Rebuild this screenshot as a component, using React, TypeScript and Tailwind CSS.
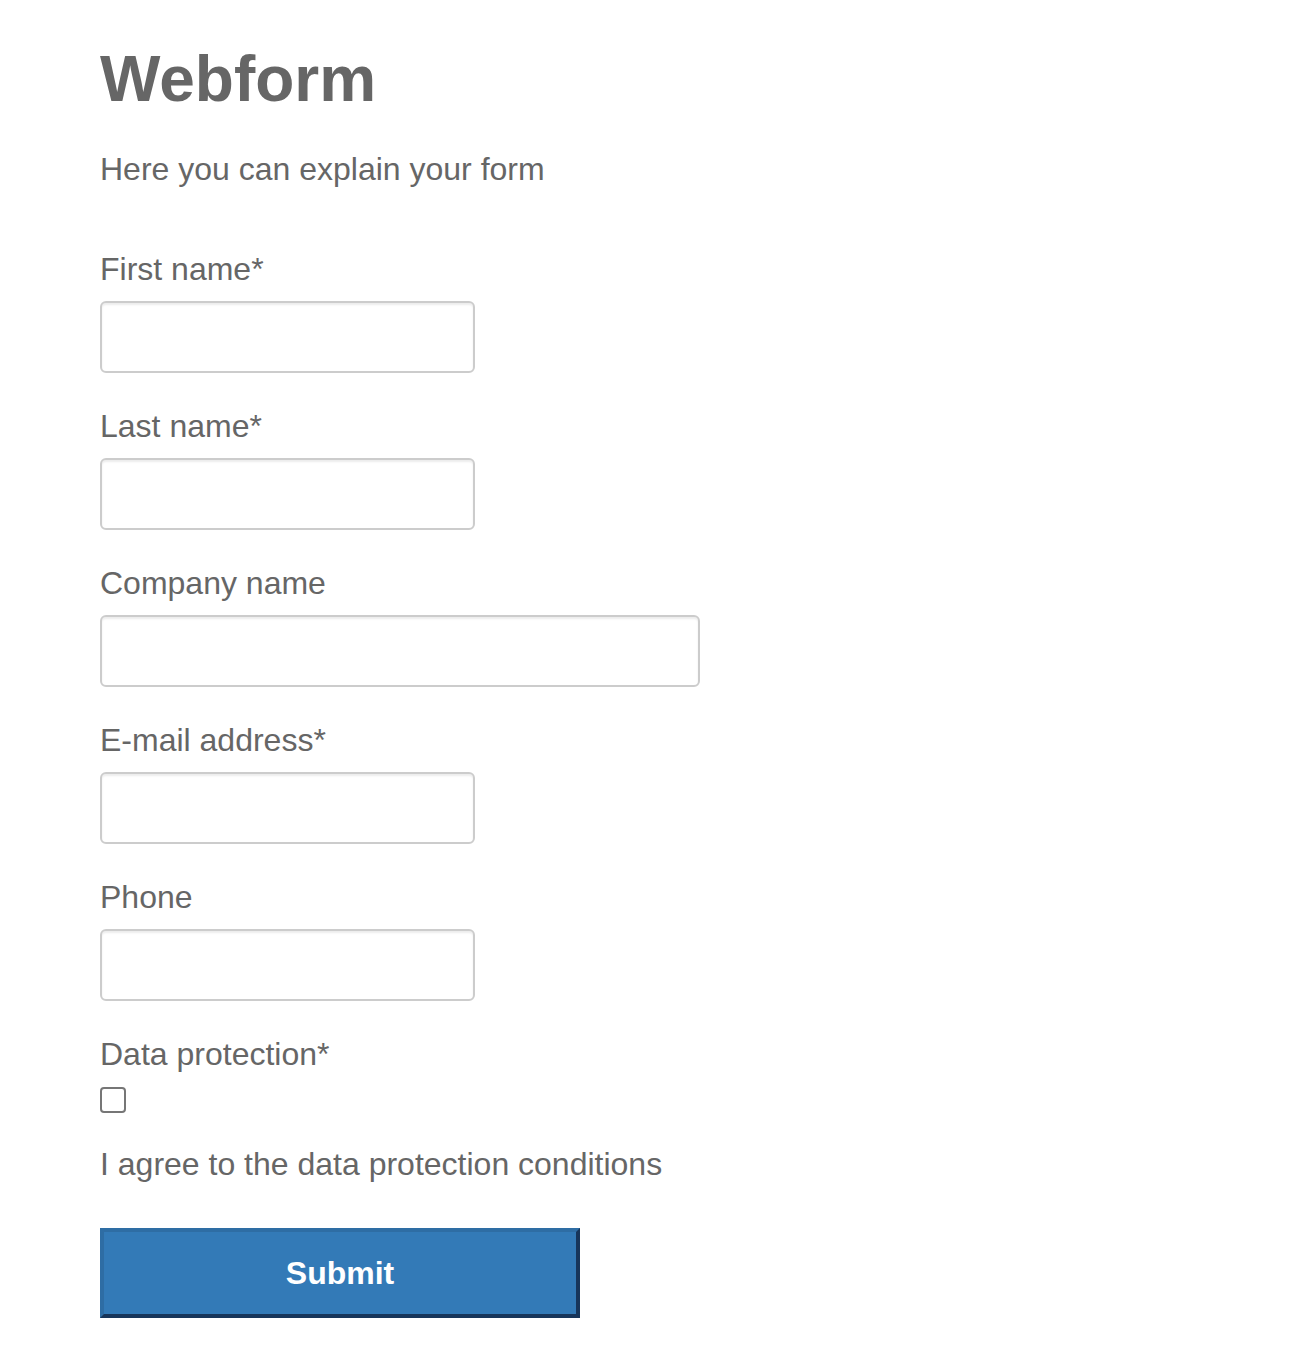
import React from 'react';

export default function App() {
  const fields = [
    { label: 'First name*', wide: false },
    { label: 'Last name*', wide: false },
    { label: 'Company name', wide: true },
    { label: 'E-mail address*', wide: false },
    { label: 'Phone', wide: false },
  ];

  return (
    <div className="min-h-screen bg-white font-['Liberation_Sans',Arial,sans-serif] text-[#666666]">
      <div className="pl-[100px] pt-[42px]">
        <h1 className="text-[64px] leading-[74px] font-bold">Webform</h1>
        <p className="mt-[35px] text-[32px] leading-[37px]">Here you can explain your form</p>

        <form className="mt-[65px]" onSubmit={(e) => e.preventDefault()}>
          {fields.map((field, index) => (
            <div key={index} className="mb-[37px]">
              <label className="block text-[32px] leading-[33px] mb-[15px]">{field.label}</label>
              <input
                type="text"
                className={`block h-[72px] ${field.wide ? 'w-[600px]' : 'w-[375px]'} rounded-[6px] border-2 border-[#cccccc] bg-white px-3 text-[32px] shadow-[inset_0_2px_2px_rgba(0,0,0,0.075)] outline-none`}
              />
            </div>
          ))}

          <div>
            <label className="block text-[32px] leading-[33px]">Data protection*</label>
            <div className="mt-[16px] h-[26px] w-[26px] rounded-[4px] border-2 border-[#767676] bg-white" />
            <p className="mt-[35px] text-[32px] leading-[33px]">I agree to the data protection conditions</p>
          </div>

          <button
            type="submit"
            className="mt-[47px] block h-[90px] w-[480px] border-[4px] border-t-[#2e6da4] border-l-[#2e6da4] border-r-[#17355a] border-b-[#17355a] bg-[#337ab7] text-[32px] font-bold text-white"
          >
            Submit
          </button>
        </form>
      </div>
    </div>
  );
}
